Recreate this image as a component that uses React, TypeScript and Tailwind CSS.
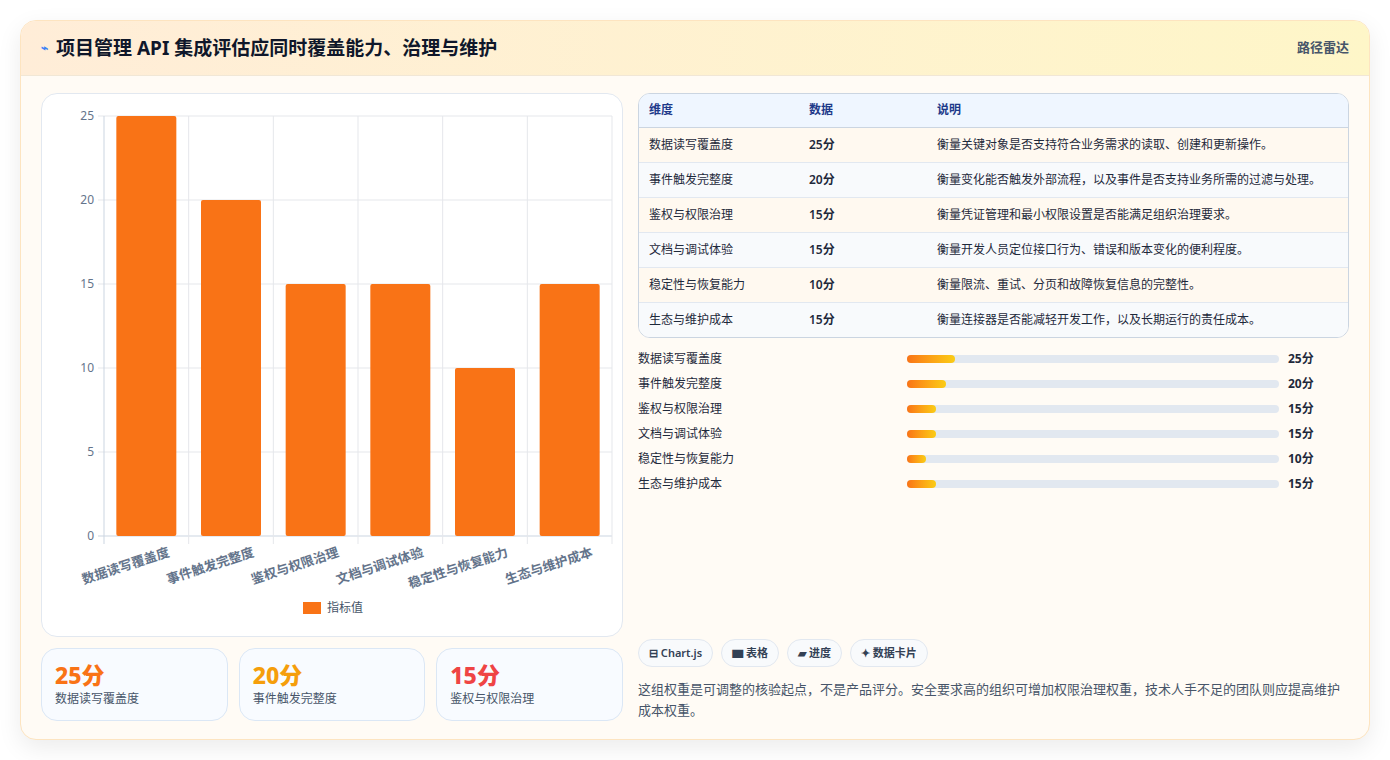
const rows = [
  { name: "数据读写覆盖度", v: 25, desc: "衡量关键对象是否支持符合业务需求的读取、创建和更新操作。" },
  { name: "事件触发完整度", v: 20, desc: "衡量变化能否触发外部流程，以及事件是否支持业务所需的过滤与处理。" },
  { name: "鉴权与权限治理", v: 15, desc: "衡量凭证管理和最小权限设置是否能满足组织治理要求。" },
  { name: "文档与调试体验", v: 15, desc: "衡量开发人员定位接口行为、错误和版本变化的便利程度。" },
  { name: "稳定性与恢复能力", v: 10, desc: "衡量限流、重试、分页和故障恢复信息的完整性。" },
  { name: "生态与维护成本", v: 15, desc: "衡量连接器是否能减轻开发工作，以及长期运行的责任成本。" },
];

const font = { fontFamily: '"Noto Sans", "Noto Sans CJK SC", sans-serif' };

function BarChart() {
  // plot area inside the chart card (card origin at 40,93)
  const x0 = 62, x1 = 570, y0 = 22, y1 = 442;
  const step = (x1 - x0) / 6;
  const unit = (y1 - y0) / 25;
  return (
    <svg width="580" height="541" className="block">
      {[0, 5, 10, 15, 20, 25].map((t) => {
        const y = y1 - t * unit;
        return (
          <g key={t}>
            <line x1={x0 - 6} x2={x1} y1={y} y2={y} stroke={t === 0 ? "#cbd5e1" : "#e5e7eb"} />
            <text x={x0 - 10} y={y + 4} textAnchor="end" fontSize="12" fill="#64748b">{t}</text>
          </g>
        );
      })}
      {Array.from({ length: 7 }).map((_, i) => (
        <line key={i} x1={x0 + i * step} x2={x0 + i * step} y1={y0} y2={y1 + 8} stroke={i === 0 ? "#cbd5e1" : "#e5e7eb"} />
      ))}
      {rows.map((r, i) => {
        const cx = x0 + step * i + step / 2;
        const h = r.v * unit;
        return (
          <g key={r.name}>
            <rect x={cx - 30} y={y1 - h} width="60" height={h} rx="2" fill="#f97316" />
            <text x={cx + 24} y={y1 + 20} textAnchor="end" fontSize="13" fontWeight="600" fill="#64748b" transform={`rotate(-18 ${cx + 24} ${y1 + 20})`}>
              {r.name}
            </text>
          </g>
        );
      })}
      <rect x="261" y="508" width="18" height="12" fill="#f97316" />
      <text x="285" y="518" fontSize="12" fill="#475569">指标值</text>
    </svg>
  );
}

export default function App() {
  const stats = [
    { v: "25分", l: "数据读写覆盖度", c: "text-[#f97316]" },
    { v: "20分", l: "事件触发完整度", c: "text-[#f59e0b]" },
    { v: "15分", l: "鉴权与权限治理", c: "text-[#ef4444]" },
  ];
  return (
    <div className="h-[760px] w-[1390px] bg-white p-5" style={font}>
      <div className="flex h-[720px] flex-col overflow-hidden rounded-2xl border border-[#fde4c0] bg-[#fffbf5] shadow-[0_8px_24px_rgba(0,0,0,0.08)]">
        <header className="flex h-[55px] items-center justify-between border-b border-[#f1e7d6] bg-gradient-to-r from-[#ffedd8] to-[#fef6c8] px-5">
          <h1 className="flex items-center gap-2 text-[19px] font-bold text-[#0f172a]">
            <span className="text-xs text-[#3b82f6]">⌁</span>
            项目管理 API 集成评估应同时覆盖能力、治理与维护
          </h1>
          <span className="text-[13px] font-semibold text-[#475569]">路径雷达</span>
        </header>
        <div className="flex flex-1 gap-[15px] px-5 pt-[17px]">
          <div className="flex w-[582px] flex-col gap-[11px]">
            <div className="h-[544px] rounded-2xl border border-[#e2e8f0] bg-white">
              <BarChart />
            </div>
            <div className="grid grid-cols-3 gap-[11px]">
              {stats.map((s) => (
                <div key={s.l} className="h-[73px] rounded-2xl border border-[#dbe7f5] bg-[#f8fbff] px-[13px] pt-[10px]">
                  <div className={`text-[23px] font-extrabold leading-8 ${s.c}`}>{s.v}</div>
                  <div className="text-xs text-[#475569]">{s.l}</div>
                </div>
              ))}
            </div>
          </div>
          <div className="flex flex-1 flex-col">
            <div className="overflow-hidden rounded-xl border border-[#cbd5e1] bg-white">
              <table className="w-full text-xs">
                <thead>
                  <tr className="h-[33px] border-b border-[#cbd5e1] bg-[#eff6ff] text-left text-[#1e3a8a]">
                    <th className="w-[170px] pl-[10px] font-semibold">维度</th>
                    <th className="w-[128px] font-semibold">数据</th>
                    <th className="font-semibold">说明</th>
                  </tr>
                </thead>
                <tbody>
                  {rows.map((r, i) => (
                    <tr key={r.name} className={`h-[35px] border-b border-[#e2e8f0] text-[#1e293b] last:border-0 ${i % 2 === 0 ? "bg-[#fff9f0]" : "bg-[#f8fafc]"}`}>
                      <td className="pl-[10px]">{r.name}</td>
                      <td className="font-semibold">{r.v}分</td>
                      <td>{r.desc}</td>
                    </tr>
                  ))}
                </tbody>
              </table>
            </div>
            <div className="mt-[8px] flex flex-col">
              {rows.map((r) => (
                <div key={r.name} className="flex h-[25px] items-center text-xs text-[#1e293b]">
                  <span className="w-[269px]">{r.name}</span>
                  <div className="h-2 w-[372px] rounded-full bg-[#e2e8f0]">
                    <div className="h-2 rounded-full bg-gradient-to-r from-[#f97316] to-[#facc15]" style={{ width: `${r.v * 0.52}%` }} />
                  </div>
                  <span className="ml-[9px] font-bold">{r.v}分</span>
                </div>
              ))}
            </div>
            <div className="mt-auto mb-[18px]">
              <div className="flex gap-2">
                {["⊟ Chart.js", "▆ 表格", "▰ 进度", "✦ 数据卡片"].map((c) => (
                  <span key={c} className="rounded-full border border-[#e2e8f0] bg-[#f8fafc] px-[10px] py-[5px] text-[11px] font-semibold text-[#334155]">
                    {c}
                  </span>
                ))}
              </div>
              <p className="mt-[12px] text-[13px] leading-[21px] text-[#475569]">
                这组权重是可调整的核验起点，不是产品评分。安全要求高的组织可增加权限治理权重，技术人手不足的团队则应提高维护成本权重。
              </p>
            </div>
          </div>
        </div>
      </div>
    </div>
  );
}
